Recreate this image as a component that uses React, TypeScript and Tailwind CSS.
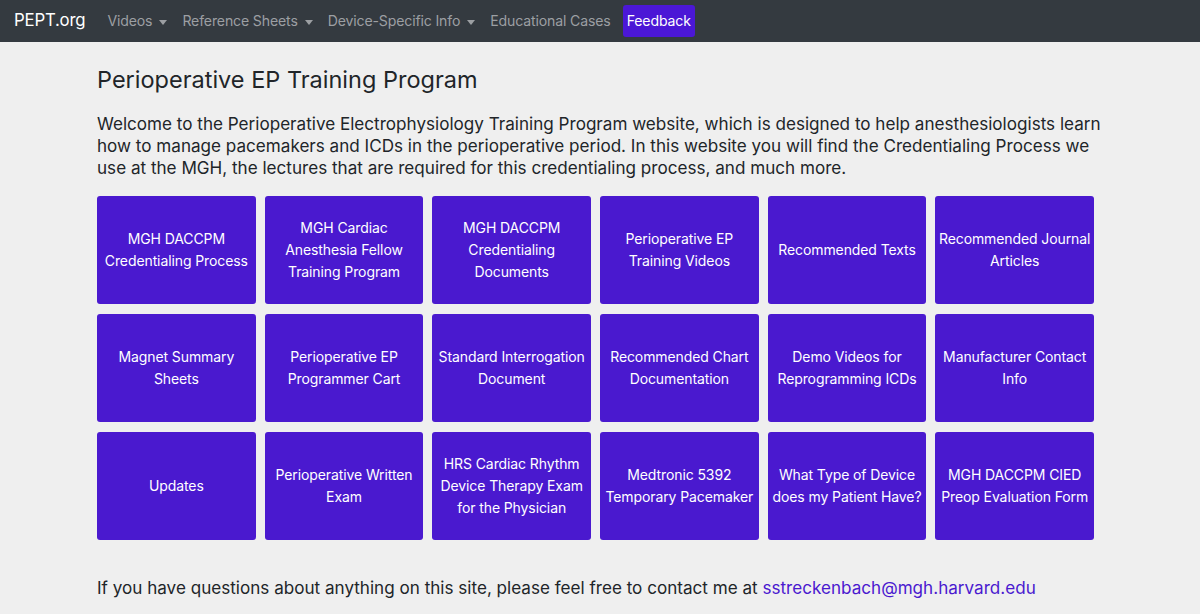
const tiles = [
  ['MGH DACCPM', 'Credentialing Process'],
  ['MGH Cardiac', 'Anesthesia Fellow', 'Training Program'],
  ['MGH DACCPM', 'Credentialing', 'Documents'],
  ['Perioperative EP', 'Training Videos'],
  ['Recommended Texts'],
  ['Recommended Journal', 'Articles'],
  ['Magnet Summary', 'Sheets'],
  ['Perioperative EP', 'Programmer Cart'],
  ['Standard Interrogation', 'Document'],
  ['Recommended Chart', 'Documentation'],
  ['Demo Videos for', 'Reprogramming ICDs'],
  ['Manufacturer Contact', 'Info'],
  ['Updates'],
  ['Perioperative Written', 'Exam'],
  ['HRS Cardiac Rhythm', 'Device Therapy Exam', 'for the Physician'],
  ['Medtronic 5392', 'Temporary Pacemaker'],
  ['What Type of Device', 'does my Patient Have?'],
  ['MGH DACCPM CIED', 'Preop Evaluation Form'],
];

function Caret() {
  return <span className="ml-[7px] inline-block h-0 w-0 border-x-[4px] border-t-[5px] border-x-transparent border-t-current align-middle" />;
}

export default function App() {
  return (
    <div className="min-h-[614px] bg-[#efefef] font-['Inter','Helvetica',sans-serif] text-[#212529]">
      {/* Navbar */}
      <nav className="flex h-[42px] items-center bg-[#343a40] pl-[14px]">
        <a className="mr-[22px] text-[16.8px] tracking-[-0.2px] text-white">PEPT.org</a>
        <div className="flex items-center gap-[15px] text-[14.1px] tracking-[-0.15px] text-[#9c9fa3]">
          <a>Videos<Caret /></a>
          <a>Reference Sheets<Caret /></a>
          <a>Device-Specific Info<Caret /></a>
          <a>Educational Cases</a>
          <a className="-ml-[3px] flex h-[32px] items-center rounded-[3px] bg-[#4b17d6] px-[4px] text-white">Feedback</a>
        </div>
      </nav>

      <main className="ml-[97px] w-[1010px]">
        <h1 className="pt-[23px] text-[23.5px] leading-[30px]">Perioperative EP Training Program</h1>
        <p className="mt-[18px] text-[17.1px] leading-[22px]">
          Welcome to the Perioperative Electrophysiology Training Program website, which is designed to help anesthesiologists learn<br />
          how to manage pacemakers and ICDs in the perioperative period. In this website you will find the Credentialing Process we<br />
          use at the MGH, the lectures that are required for this credentialing process, and much more.
        </p>

        <div className="mt-[17px] grid w-[997px] grid-cols-6 gap-x-[9px] gap-y-[10px]">
          {tiles.map((lines, i) => (
            <a
              key={i}
              className="flex h-[108px] flex-col items-center justify-center whitespace-nowrap rounded-[3px] bg-[#4a19cf] text-center text-[14px] leading-[22px] tracking-[-0.1px] text-white"
            >
              {lines.map((l, j) => (
                <span key={j}>{l}</span>
              ))}
            </a>
          ))}
        </div>

        <p className="mt-[37px] text-[17.1px] leading-[22px]">
          If you have questions about anything on this site, please feel free to contact me at{' '}
          <a className="text-[#4a19cf]">sstreckenbach@mgh.harvard.edu</a>
        </p>
      </main>
    </div>
  );
}
